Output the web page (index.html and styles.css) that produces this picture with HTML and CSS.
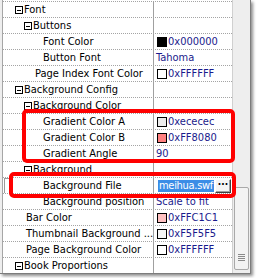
FILE: index.html
```html
<!DOCTYPE html>
<html>
<head>
<meta charset="utf-8">
<link rel="stylesheet" href="styles.css">
</head>
<body>
<div class="frame">
  <div class="gutter"></div>
  <div class="grid">
    <div class="row cat"><div class="name l0"><span class="tog"></span>Font</div><div class="val"></div></div>
    <div class="row cat"><div class="name l1"><span class="tog"></span>Buttons</div><div class="val"></div></div>
    <div class="row"><div class="name p2">Font Color</div><div class="val"><span class="sw" style="background:#000000"></span>0x000000</div></div>
    <div class="row"><div class="name p2">Button Font</div><div class="val plain">Tahoma</div></div>
    <div class="row"><div class="name p1b">Page Index Font Color</div><div class="val"><span class="sw" style="background:#FFFFFF"></span>0xFFFFFF</div></div>
    <div class="row cat"><div class="name l0"><span class="tog"></span>Background Config</div><div class="val"></div></div>
    <div class="row cat"><div class="name l1"><span class="tog"></span>Background Color</div><div class="val"></div></div>
    <div class="row"><div class="name p2">Gradient Color A</div><div class="val"><span class="sw" style="background:#ececec"></span>0xececec</div></div>
    <div class="row"><div class="name p2">Gradient Color B</div><div class="val"><span class="sw" style="background:#FF8080"></span>0xFF8080</div></div>
    <div class="row"><div class="name p2">Gradient Angle</div><div class="val plain">90</div></div>
    <div class="row cat"><div class="name l1"><span class="tog"></span>Background</div><div class="val"></div></div>
    <div class="row sel"><div class="name p2"><span class="focus"></span>Background File</div><div class="val edit"><span class="hl">meihua.swf</span><span class="dots">···</span></div></div>
    <div class="row"><div class="name p2">Background position</div><div class="val plain">Scale to fit</div></div>
    <div class="row"><div class="name p1">Bar Color</div><div class="val"><span class="sw" style="background:#FFC1C1"></span>0xFFC1C1</div></div>
    <div class="row"><div class="name p1">Thumbnail Background ...</div><div class="val"><span class="sw" style="background:#F5F5F5"></span>0xF5F5F5</div></div>
    <div class="row"><div class="name p1">Page Background Color</div><div class="val"><span class="sw" style="background:#FFFFFF"></span>0xFFFFFF</div></div>
    <div class="row cat"><div class="name l0"><span class="tog"></span>Book Proportions</div><div class="val"></div></div>
  </div>
  <div class="scroll">
    <div class="thumb"><span class="grip"></span></div>
  </div>
  <div class="mark mark1"></div>
  <div class="mark mark2"></div>
</div>
</body>
</html>
```
FILE: styles.css
```css
html, body {
  margin: 0;
  padding: 0;
  background: #ffffff;
}
body {
  width: 257px;
  height: 278px;
  overflow: hidden;
  font-family: "DejaVu Sans", "Liberation Sans", sans-serif;
  font-stretch: condensed;
  font-size: 11px;
}
.frame {
  position: relative;
  display: flex;
  width: 250px;
  height: 273px;
  border-right: 1px solid #7c7c7c;
  border-bottom: 1px solid #7c7c7c;
  box-shadow: 2px 2px 3px rgba(0,0,0,0.45);
  background: #ffffff;
}
.gutter {
  width: 2px;
  background: #eeeeee;
  border-right: 1px solid #a6a6a6;
}
.grid {
  width: 229px;
  padding-top: 1px;
  display: flex;
  flex-direction: column;
  background: #ffffff;
}
.row {
  display: grid;
  grid-template-columns: 151px 78px;
  height: 15px;
  border-top: 1px dotted #a4a4a4;
}
.name {
  border-right: 1px solid #a0a0a0;
  color: #000000;
  white-space: nowrap;
  overflow: hidden;
  display: flex;
  align-items: center;
  line-height: 15px;
  position: relative;
}
.l0 { padding-left: 12px; }
.l1 { padding-left: 21px; }
.p2 { padding-left: 40px; }
.p1b { padding-left: 32px; }
.p1 { padding-left: 23px; }
.tog {
  border: 1px solid #000000;
  margin-right: 1px;
  position: relative;
  flex: none;
  box-sizing: content-box;
  width: 6px;
  height: 6px;
}
.tog::after {
  content: "";
  position: absolute;
  left: 1px;
  top: 3px;
  width: 4px;
  height: 1px;
  background: #000000;
}
.val {
  color: #1a1a8c;
  display: flex;
  align-items: center;
  white-space: nowrap;
  overflow: hidden;
  padding-left: 3px;
  line-height: 15px;
}
.val.plain { padding-left: 2px; }
.sw {
  width: 10px;
  height: 10px;
  box-sizing: border-box;
  border: 1px solid #000000;
  margin-right: 1px;
  flex: none;
}
.focus {
  position: absolute;
  left: 1px;
  top: 0;
  width: 4px;
  height: 14px;
  border: 1px solid #9a9a9a;
  border-right: none;
}
.val.edit {
  padding-left: 4px;
}
.hl {
  background: #3b8de6;
  color: #ffffff;
  height: 12px;
  line-height: 12px;
  padding: 0 1px;
  letter-spacing: -0.3px;
  flex: none;
}
.dots {
  width: 14px;
  height: 12px;
  margin-left: 1px;
  border: 1px solid #ffffff;
  border-right-color: #404040;
  border-bottom-color: #404040;
  background: #f4f4f4;
  color: #000000;
  font-weight: bold;
  font-size: 10px;
  line-height: 9px;
  text-align: center;
  flex: none;
  box-shadow: inset -1px -1px 0 #a0a0a0;
}
.scroll {
  width: 17px;
  border-left: 1px solid #d0d0d0;
  background: #eeeeee;
  display: flex;
  flex-direction: column;
}
.thumb {
  margin-top: 187px;
  margin-left: 1px;
  width: 13px;
  height: 81px;
  border: 1px solid #a9a9a9;
  border-radius: 2px;
  background: #f3f3f3;
  display: flex;
  align-items: flex-end;
  justify-content: center;
}
.grip {
  width: 7px;
  height: 7px;
  margin-bottom: 8px;
  background: repeating-linear-gradient(to bottom, #8a8a8a 0, #8a8a8a 1px, transparent 1px, transparent 2px);
}
.mark {
  position: absolute;
  border: 4px solid #ff0000;
  border-radius: 5px;
  box-sizing: border-box;
}
.mark1 {
  left: 22px;
  top: 109px;
  width: 213px;
  height: 54px;
}
.mark2 {
  left: 9px;
  top: 172px;
  width: 227px;
  height: 26px;
}
```
